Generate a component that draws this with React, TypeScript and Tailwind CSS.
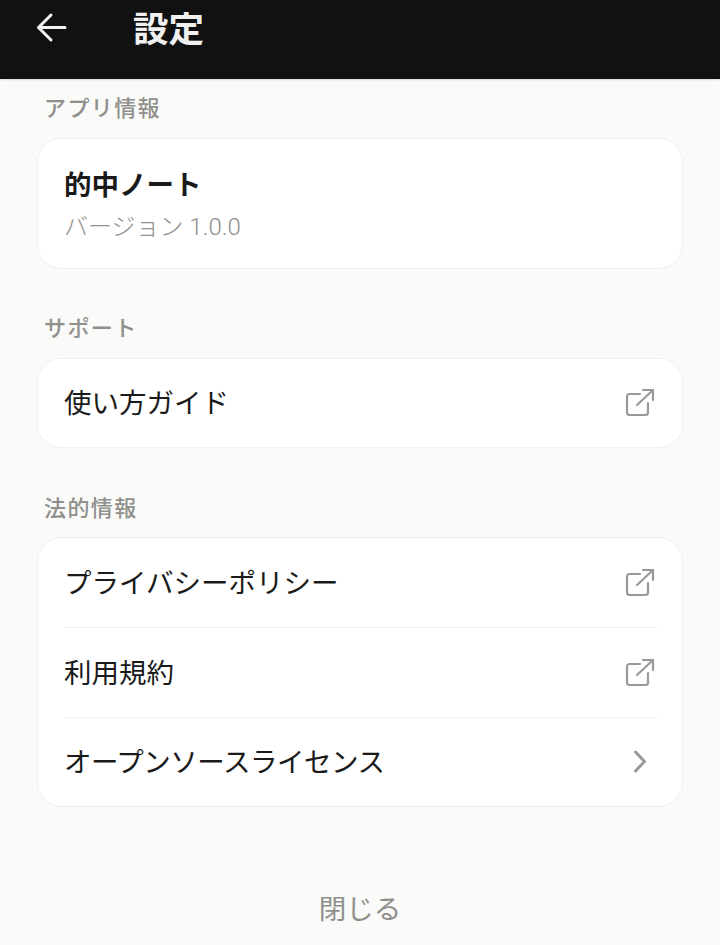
import React from "react";

const F = { fontFamily: 'Roboto,"Noto Sans CJK JP",sans-serif' };

function Ext() {
  return (
    <svg width="30" height="30" viewBox="0 0 30 30" fill="none" stroke="#999997" strokeWidth="2.2" strokeLinecap="round" strokeLinejoin="round">
      <path d="M15 6H4.500A2.500 2.500 0 0 0 2 8.500V24.500A2.500 2.500 0 0 0 4.500 27H20.500A2.500 2.500 0 0 0 23 24.500V15" />
      <path d="M18 2H28V12" />
      <path d="M28 2L12 17" />
    </svg>
  );
}

function Chev() {
  return (
    <svg width="30" height="30" viewBox="0 0 30 30" fill="none" stroke="#999997" strokeWidth="3" strokeLinecap="round" strokeLinejoin="round">
      <path d="M10.500 5L19.500 14.500L10.500 24" />
    </svg>
  );
}

function Label({ children }: { children: React.ReactNode }) {
  return <div className="h-[24px] pl-[44px] text-[22px] leading-[24px] font-medium tracking-[1.4px] text-[#8f8f8c]">{children}</div>;
}

function Row({ text, icon, border, tight }: { text: string; icon: React.ReactNode; border?: boolean; tight?: boolean }) {
  return (
    <div className={`flex items-center justify-between mr-[25px] ${border ? "h-[90px] border-b border-[#f3f2ef]" : "h-[88px]"}`}>
      <span className={`text-[27.5px] leading-[36px] text-[#1a1a1a] mt-[2px] ${tight ? "tracking-[-0.5px]" : ""}`}>{text}</span>
      <span className="mr-[2px] flex">{icon}</span>
    </div>
  );
}

export default function App() {
  return (
    <div style={F} className="w-[720px] h-[945px] overflow-hidden bg-[#fafaf8] flex flex-col">
      <header className="h-[79px] bg-[#111111] flex items-start pl-[35px] pt-[8px] shrink-0 shadow-sm">
        <svg width="34" height="38" viewBox="0 0 34 38" fill="none" stroke="#f2f2f2" strokeWidth="3" strokeLinecap="round" strokeLinejoin="round">
          <path d="M30 19.500H4" />
          <path d="M16 7L3.500 19.500L16 32" />
        </svg>
        <h1 className="ml-[64px] text-[35.500px] leading-[44px] font-semibold text-[#f0f0f0]">設定</h1>
      </header>
      <div className="pt-[18px]">
        <Label>アプリ情報</Label>
      </div>
      <section className="mx-[37px] mt-[17px] h-[131px] rounded-[24px] bg-white border border-[#f1f0ec] pl-[26px] pt-[28px]">
        <div className="text-[27.5px] leading-[38px] font-semibold text-[#1a1a1a]">的中ノート</div>
        <div className="mt-[6px] text-[24px] leading-[32px] font-light text-[#8f8f8c]">バージョン 1.0.0</div>
      </section>
      <div className="mt-[48px]">
        <Label>サポート</Label>
      </div>
      <section className="mx-[37px] mt-[17px] rounded-[24px] bg-white border border-[#f1f0ec] pl-[26px]">
        <Row text="使い方ガイド" icon={<Ext />} />
      </section>
      <div className="mt-[49px]">
        <Label>法的情報</Label>
      </div>
      <section className="mx-[37px] mt-[16px] rounded-[24px] bg-white border border-[#f1f0ec] pl-[26px]">
        <Row text="プライバシーポリシー" icon={<Ext />} border />
        <Row text="利用規約" icon={<Ext />} border />
        <Row text="オープンソースライセンス" icon={<Chev />} tight />
      </section>
      <div className="mt-[83px] text-center text-[27.5px] leading-[40px] text-[#8f8f8c]">閉じる</div>
    </div>
  );
}
